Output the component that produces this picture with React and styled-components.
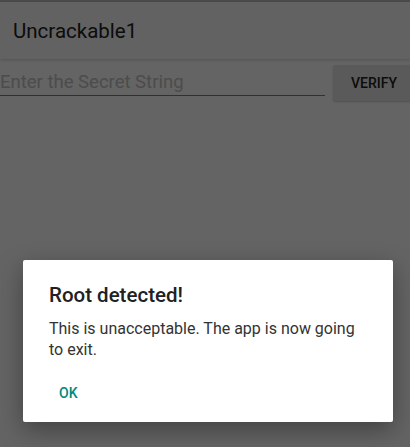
import React from 'react'
import styled, { createGlobalStyle } from 'styled-components'

const Global = createGlobalStyle`
  html, body { margin: 0; padding: 0; }
  body { font-family: Roboto, "Noto Sans", sans-serif; background: #fafafa; }
`

const Screen = styled.div`
  position: relative;
  width: 410px;
  height: 447px;
  overflow: hidden;
  background: #fafafa;
  display: flex;
  flex-direction: column;
`

const StatusEdge = styled.div`
  height: 2px;
  background: #bcbcbc;
`

const AppBar = styled.header`
  height: 57px;
  background: #f5f5f5;
  display: flex;
  align-items: center;
  padding: 0 13px;
  box-shadow: 0 1px 3px rgba(0,0,0,0.18);
  font-size: 20.5px;
  font-weight: 400;
  color: #212121;
  position: relative;
  z-index: 1;
`

const FormRow = styled.div`
  display: flex;
  align-items: flex-start;
  padding-top: 6px;
  gap: 8px;
`

const Field = styled.div`
  flex: 0 0 325px;
  height: 31px;
  box-sizing: border-box;
  padding-top: 3px;
  border-bottom: 1.5px solid #7a7a7a;
  display: flex;
  align-items: center;
  font-size: 18.5px;
  color: #bdbdbd;
  white-space: nowrap;
`

const VerifyButton = styled.div`
  flex: 1;
  height: 36px;
  background: #e0e0e0;
  border-radius: 2px 0 0 2px;
  display: flex;
  align-items: center;
  padding-left: 18px;
  font-size: 14px;
  font-weight: 500;
  color: #212121;
  box-shadow: 0 1px 2px rgba(0,0,0,0.2);
`

const Scrim = styled.div`
  position: absolute;
  inset: 0;
  z-index: 2;
  background: rgba(0,0,0,0.6);
`

const Dialog = styled.div`
  position: absolute;
  z-index: 3;
  left: 23px;
  top: 260px;
  width: 370px;
  height: 162px;
  background: #fff;
  border-radius: 2px;
  box-shadow: 0 8px 24px rgba(0,0,0,0.35);
  box-sizing: border-box;
  padding: 22px 26px 0 26px;
  display: flex;
  flex-direction: column;
`

const DialogTitle = styled.div`
  font-size: 20.5px;
  font-weight: 500;
  color: #212121;
  line-height: 26px;
`

const DialogText = styled.div`
  margin-top: 10px;
  font-size: 16px;
  line-height: 21px;
  color: #333;
`

const DialogButton = styled.div`
  margin-top: 25px;
  margin-left: 10px;
  font-size: 14px;
  font-weight: 500;
  color: #00897b;
`

export default function App() {
  return (
    <>
      <Global />
      <Screen>
        <StatusEdge />
        <AppBar>Uncrackable1</AppBar>
        <FormRow>
          <Field>Enter the Secret String</Field>
          <VerifyButton>VERIFY</VerifyButton>
        </FormRow>
        <Scrim />
        <Dialog>
          <DialogTitle>Root detected!</DialogTitle>
          <DialogText>This is unacceptable. The app is now going to exit.</DialogText>
          <DialogButton>OK</DialogButton>
        </Dialog>
      </Screen>
    </>
  )
}
